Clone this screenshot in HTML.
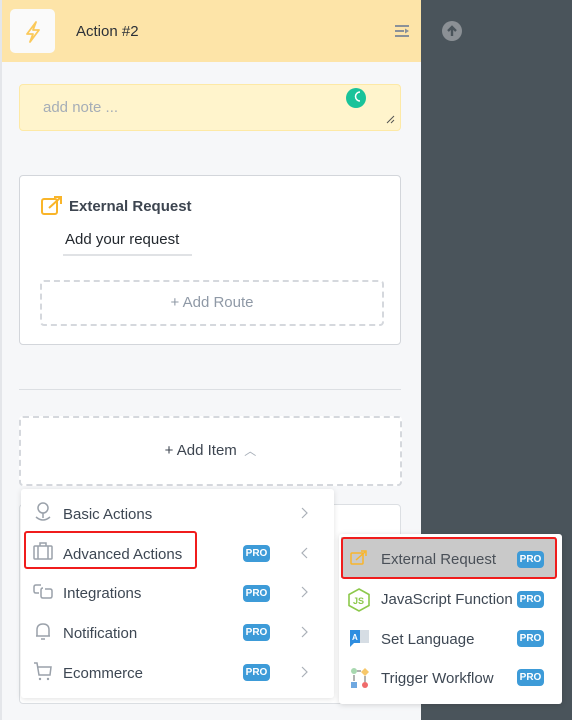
<!DOCTYPE html>
<html><head><style>
*{box-sizing:border-box;margin:0;padding:0}
body{width:572px;height:720px;overflow:hidden;font-family:"Liberation Sans",sans-serif;background:#4a545b;position:relative}
.left{position:absolute;left:0;top:0;width:421px;height:720px;background:#f6f7f9;border-left:2px solid #e4e6ea}
.hdr{position:absolute;left:0;top:0;width:419px;height:62px;background:#fde4a8}
.ico{position:absolute;left:8px;top:9px;width:45px;height:44px;background:#fafafa;border-radius:5px}
.abs{position:absolute}
.pro{position:absolute;background:#3d9bd8;color:#fff;font-size:10px;font-weight:bold;border-radius:4px;width:27px;height:17px;line-height:17px;text-align:center}
.row{position:absolute;font-size:15px;color:#3d4753}
.chev{position:absolute}
</style></head><body>
<div class="left">
 <div class="hdr">
  <div class="ico"><svg width="45" height="44" viewBox="0 0 45 44"><path d="M26 13 L17 25 L23 25 L20 33 L29 21 L23 21 Z" fill="none" stroke="#fbc95a" stroke-width="1.8" stroke-linejoin="round"/></svg></div>
  <div class="abs" style="left:74px;top:23px;font-size:15px;color:#2c3138">Action #2</div>
  <svg class="abs" style="left:393px;top:25px" width="15" height="13"><rect x="0" y="0" width="14" height="2" fill="#8a9199"/><rect x="0" y="5" width="9" height="2" fill="#8a9199"/><rect x="0" y="10" width="14" height="2" fill="#8a9199"/><path d="M10 3.5 L14 6 L10 8.5Z" fill="#8a9199"/></svg>
 </div>
 <div class="abs" style="left:17px;top:84px;width:382px;height:47px;background:#fff4cc;border:1px solid #fde9a6;border-radius:4px">
  <div class="abs" style="left:23px;top:14px;color:#a5adb7;font-size:15px">add note ...</div>
  <div class="abs" style="left:326px;top:3px;width:20px;height:20px;border-radius:50%;background:#19c39a"></div>
  <svg class="abs" style="left:333px;top:6px" width="10" height="12"><path d="M7 1 A4.5 4.5 0 0 0 7 10" fill="none" stroke="#fff" stroke-width="1.5"/></svg>
  <svg class="abs" style="left:366px;top:30px" width="9" height="9"><path d="M8 1L1 8M8 5L5 8" stroke="#555" stroke-width="1"/></svg>
 </div>
 <div class="abs" style="left:17px;top:175px;width:382px;height:170px;background:#fff;border:1px solid #d3d6db;border-radius:4px">
  <svg class="abs" style="left:21px;top:20px" width="22" height="20"><rect x="1" y="3" width="15" height="15" rx="2" fill="none" stroke="#f9b52a" stroke-width="2"/><path d="M8 12 L19 2 M13 1 H20 V8" fill="none" stroke="#f9b52a" stroke-width="2"/></svg>
  <div class="abs" style="left:49px;top:22px;font-size:15px;font-weight:bold;color:#3d4550">External Request</div>
  <div class="abs" style="left:45px;top:55px;font-size:15px;color:#23282e">Add your request</div>
  <div class="abs" style="left:43px;top:78px;width:129px;height:2px;background:#e0e2e5"></div>
  <div class="abs" style="left:20px;top:104px;width:344px;height:46px;border:2px dashed #d5d8dd;border-radius:4px;text-align:center;line-height:42px;color:#8f99a6;font-size:15px">+ Add Route</div>
 </div>
 <div class="abs" style="left:17px;top:389px;width:382px;height:1px;background:#dcdfe3"></div>
 <div class="abs" style="left:17px;top:416px;width:383px;height:70px;background:#fff;border:2px dashed #d5d8dd;border-radius:4px;text-align:center;line-height:66px;color:#3d4550;font-size:15px">+ Add Item <span style="color:#a5adb7;font-size:12px">&nbsp;︿</span></div>
 <div class="abs" style="left:17px;top:504px;width:382px;height:200px;background:#fff;border:1px solid #dcdfe3;border-radius:4px"></div>
</div>
<div class="abs" style="left:442px;top:21px;width:20px;height:20px;border-radius:50%;background:#8b9095"></div>
<svg class="abs" style="left:442px;top:21px" width="20" height="20"><path d="M10 15V6M6 10L10 6L14 10" stroke="#4a545b" stroke-width="2.4" fill="none"/></svg>
<div class="abs" style="left:21px;top:489px;width:313px;height:209px;background:#fff;border-radius:3px;box-shadow:0 1px 6px rgba(0,0,0,.12)">
 <svg class="abs" style="left:12px;top:12px" width="20" height="22"><circle cx="10" cy="7" r="5" fill="none" stroke="#9aa1aa" stroke-width="1.5"/><path d="M10 12V17M3 16 Q10 22 17 16" fill="none" stroke="#9aa1aa" stroke-width="1.5"/></svg>
 <div class="row" style="left:42px;top:17px">Basic Actions</div>
 <svg class="chev" style="left:280px;top:18px" width="8" height="12"><path d="M1 1L6 6L1 11" fill="none" stroke="#aab0b8" stroke-width="1.2"/></svg>
 <svg class="abs" style="left:12px;top:53px" width="20" height="18"><rect x="1" y="4" width="18" height="13" rx="1" fill="none" stroke="#9aa1aa" stroke-width="1.5"/><path d="M7 4V1H13V4M5 4V17M15 4V17" fill="none" stroke="#9aa1aa" stroke-width="1.5"/></svg>
 <div class="row" style="left:42px;top:57px">Advanced Actions</div><div class="pro" style="left:222px;top:56px">PRO</div>
 <svg class="chev" style="left:280px;top:58px" width="8" height="12"><path d="M6 1L1 6L6 11" fill="none" stroke="#aab0b8" stroke-width="1.2"/></svg>
 <svg class="abs" style="left:12px;top:93px" width="20" height="18"><path d="M8 3 H3 Q1 3 1 5 V9 Q1 11 3 11 H6 M12 7 H17 Q19 7 19 9 V14 Q19 16 17 16 H10 Q8 16 8 14 V8 Q8 6 10 6" fill="none" stroke="#9aa1aa" stroke-width="1.5"/></svg>
 <div class="row" style="left:42px;top:96px">Integrations</div><div class="pro" style="left:222px;top:96px">PRO</div>
 <svg class="chev" style="left:280px;top:97px" width="8" height="12"><path d="M1 1L6 6L1 11" fill="none" stroke="#aab0b8" stroke-width="1.2"/></svg>
 <svg class="abs" style="left:12px;top:132px" width="20" height="20"><path d="M4 15 V9 Q4 3 10 3 Q16 3 16 9 V15 H3 H17 M8 18 H12" fill="none" stroke="#9aa1aa" stroke-width="1.5"/></svg>
 <div class="row" style="left:42px;top:136px">Notification</div><div class="pro" style="left:222px;top:135px">PRO</div>
 <svg class="chev" style="left:280px;top:137px" width="8" height="12"><path d="M1 1L6 6L1 11" fill="none" stroke="#aab0b8" stroke-width="1.2"/></svg>
 <svg class="abs" style="left:12px;top:172px" width="20" height="20"><path d="M1 2 H4 L6 14 H17 L18 6 H5" fill="none" stroke="#9aa1aa" stroke-width="1.5"/><circle cx="7" cy="18" r="1.2" fill="#9aa1aa"/><circle cx="15" cy="18" r="1.2" fill="#9aa1aa"/></svg>
 <div class="row" style="left:42px;top:176px">Ecommerce</div><div class="pro" style="left:222px;top:175px">PRO</div>
 <svg class="chev" style="left:280px;top:177px" width="8" height="12"><path d="M1 1L6 6L1 11" fill="none" stroke="#aab0b8" stroke-width="1.2"/></svg>
</div>
<div class="abs" style="left:24px;top:531px;width:173px;height:38px;border:2px solid #f01c1c;border-radius:3px"></div>
<div class="abs" style="left:339px;top:534px;width:223px;height:170px;background:#fff;border-radius:3px;box-shadow:0 1px 6px rgba(0,0,0,.15)">
 <div class="abs" style="left:2px;top:3px;width:215px;height:41px;background:#c9c9c9"></div>
 <svg class="abs" style="left:11px;top:16px" width="18" height="16"><rect x="1" y="3" width="12" height="11" rx="1" fill="none" stroke="#f9b52a" stroke-width="1.5"/><path d="M6 10 L15 2 M11 1 H16 V6" fill="none" stroke="#f9b52a" stroke-width="1.5"/></svg>
 <div class="row" style="left:42px;top:17px;color:#4a5058">External Request</div><div class="pro" style="left:178px;top:17px">PRO</div>
 <svg class="abs" style="left:9px;top:54px" width="22" height="24"><path d="M11 1 L21 6.5 V17.5 L11 23 L1 17.5 V6.5Z" fill="none" stroke="#8cc84b" stroke-width="1.6"/><text x="5" y="16" font-size="9" font-family="Liberation Sans" fill="#8cc84b" font-weight="bold">JS</text></svg>
 <div class="row" style="left:42px;top:57px">JavaScript Function</div><div class="pro" style="left:178px;top:57px">PRO</div>
 <svg class="abs" style="left:11px;top:94px" width="20" height="20"><rect x="0" y="2" width="10" height="13" fill="#2f8ee0"/><path d="M0 15 L0 19 L4 15Z" fill="#2f8ee0"/><rect x="10" y="2" width="9" height="13" fill="#d6dde4"/><text x="2" y="12" font-size="8" fill="#fff" font-family="Liberation Sans" font-weight="bold">A</text></svg>
 <div class="row" style="left:42px;top:97px">Set Language</div><div class="pro" style="left:178px;top:96px">PRO</div>
 <svg class="abs" style="left:11px;top:133px" width="22" height="22"><circle cx="4" cy="4" r="3" fill="#a8d8b0"/><path d="M15 1 L19 5 L15 9 L11 5Z" fill="#f7c76a"/><rect x="1" y="15" width="6" height="6" fill="#6fa8e0"/><circle cx="15" cy="18" r="3" fill="#ef6b6b"/><path d="M7 4H11M4 8V14M15 9V15" stroke="#666" stroke-width="1"/></svg>
 <div class="row" style="left:42px;top:136px">Trigger Workflow</div><div class="pro" style="left:178px;top:135px">PRO</div>
</div>
<div class="abs" style="left:341px;top:537px;width:216px;height:42px;border:2px solid #f01c1c;border-radius:3px"></div>
</body></html>
